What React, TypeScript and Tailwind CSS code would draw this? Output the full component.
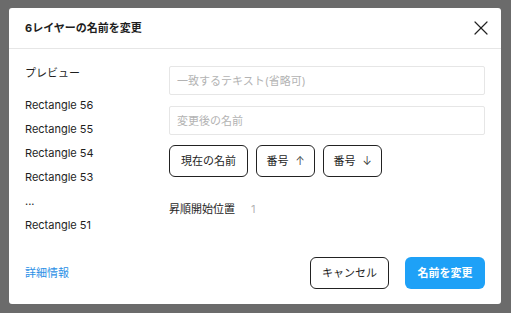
import { X } from "lucide-react";

const rows = ["Rectangle 56", "Rectangle 55", "Rectangle 54", "Rectangle 53", "...", "Rectangle 51"];

export default function App() {
  return (
    <div
      className="h-[313px] w-[511px] bg-[#6b6b6b] pl-[9px] pt-[8px] text-[11px] text-[#1e1e1e]"
      style={{ fontFamily: 'Inter, "Noto Sans CJK JP", sans-serif' }}
    >
      <div className="flex h-[296px] w-[492px] flex-col rounded-[3px] bg-white">
        <div className="flex h-[41px] items-center justify-between border-b border-[#e6e6e6] pl-4 pr-[8px]">
          <span className="font-bold">6レイヤーの名前を変更</span>
          <X size={24} strokeWidth={1.2} className="text-[#222]" />
        </div>

        <div className="flex flex-1 px-4">
          <div className="w-[144px] pt-3">
            <div className="mb-2 flex h-6 items-center">プレビュー</div>
            {rows.map((r) => (
              <div key={r} className="flex h-6 items-center">
                {r}
              </div>
            ))}
          </div>

          <div className="flex flex-1 flex-col pt-[17px]">
            <input
              placeholder="一致するテキスト(省略可)"
              className="h-[29px] rounded-[2px] border border-[#e6e6e6] px-[7px] placeholder:text-[#b3b3b3] focus:outline-none"
            />
            <input
              placeholder="変更後の名前"
              className="mt-[11px] h-[29px] rounded-[2px] border border-[#e6e6e6] px-[7px] placeholder:text-[#b3b3b3] focus:outline-none"
            />
            <div className="mt-[10px] flex gap-2">
              <button className="h-8 w-[79px] rounded-md border border-[#222]">現在の名前</button>
              <button className="h-8 w-[59px] rounded-md border border-[#222]">
                番号<span className="ml-[7px] font-light">↑</span>
              </button>
              <button className="h-8 w-[59px] rounded-md border border-[#222]">
                番号<span className="ml-[7px] font-light">↓</span>
              </button>
            </div>
            <div className="mt-5 flex h-6 items-center gap-4">
              <span>昇順開始位置</span>
              <span className="text-[#b3b3b3]">1</span>
            </div>
          </div>
        </div>

        <div className="flex items-center justify-between px-4 pb-[15px]">
          <span className="text-[#2c8fe6]">詳細情報</span>
          <div className="flex gap-4">
            <button className="h-8 w-[79px] rounded-md border border-[#222]">キャンセル</button>
            <button className="h-8 w-[80px] rounded-md bg-[#1ea1f7] font-bold text-white">名前を変更</button>
          </div>
        </div>
      </div>
    </div>
  );
}
